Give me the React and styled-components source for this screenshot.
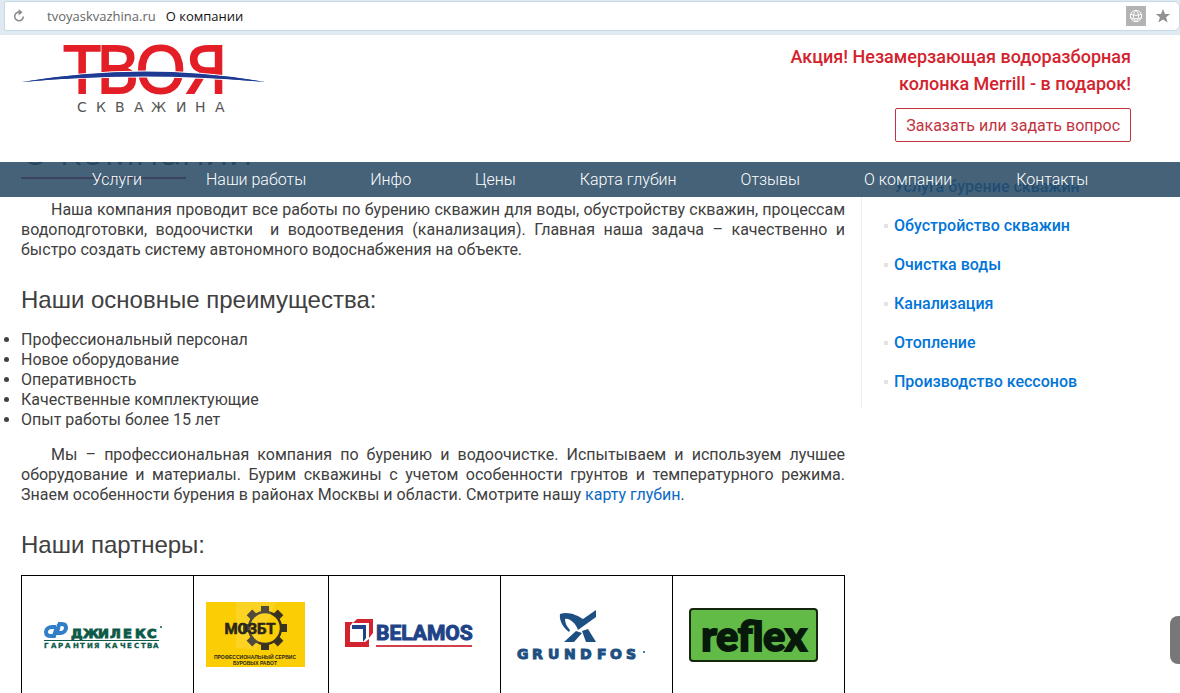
import React from 'react';
import styled, { createGlobalStyle } from 'styled-components';

const GlobalStyle = createGlobalStyle`
  * {
    box-sizing: border-box;
  }
  body {
    margin: 0;
    background: #fff;
    color: #404040;
    font-family: Roboto, "Noto Sans", sans-serif;
    font-size: 16px;
    line-height: 20px;
  }
`;

const Window = styled.div`
  position: relative;
  display: flex;
  flex-direction: column;
  height: 100vh;
  overflow: hidden;
`;

const BrowserBar = styled.div`
  flex: none;
  padding: 1px 0 4px 4px;
  background: #dfe9f1;
`;

const AddressBar = styled.div`
  display: flex;
  align-items: center;
  height: 30px;
  padding: 0 6px 0 8px;
  background: #fff;
  border: 1px solid #c6dae6;
  border-radius: 2px 6px 6px 2px;
  font-family: "Open Sans", "Noto Sans", sans-serif;
  font-size: 13px;
`;

const BarButton = styled.button`
  display: flex;
  align-items: center;
  justify-content: center;
  width: 20px;
  height: 20px;
  margin-left: ${props => props.$gap || 0};
  padding: 0;
  border: 0;
  background: ${props => props.$fill || 'none'};
`;

const Host = styled.span`
  margin-left: 18px;
  color: #666;
`;

const PageTitle = styled.span`
  flex: 1;
  margin-left: 10px;
  color: #111;
`;

const Site = styled.div`
  position: relative;
  flex: 1;
  min-height: 0;
`;

const Header = styled.header`
  position: absolute;
  top: 0;
  left: 0;
  right: 0;
  z-index: 2;
`;

const HeaderTop = styled.div`
  display: flex;
  justify-content: space-between;
  align-items: flex-start;
  padding: 8px 49px 20px 21px;
  background: #fff;
`;

const Promo = styled.div`
  display: flex;
  flex-direction: column;
  align-items: flex-end;
  gap: 11px;
  width: 360px;
`;

const PromoText = styled.p`
  margin: 0;
  color: #d2232e;
  font-size: 18px;
  font-weight: 500;
  line-height: 27px;
  text-align: right;
`;

const AskButton = styled.button`
  height: 34px;
  padding: 0 10px;
  border: 1px solid #c0343f;
  border-radius: 2px;
  background: #fff;
  color: #c0343f;
  font-family: inherit;
  font-size: 16px;
`;

const Nav = styled.nav`
  display: flex;
  justify-content: center;
  align-items: center;
  gap: 64px;
  height: 35px;
  background: rgba(37, 70, 98, 0.85);
`;

const NavLink = styled.a`
  color: #fff;
  font-weight: 300;
  text-decoration: none;
`;

const Content = styled.div`
  display: flex;
  align-items: flex-start;
  gap: 16px;
  padding: 90px 21px 0;
`;

const Main = styled.main`
  flex: 1;
`;

const Title = styled.h1`
  margin: 0 0 21px;
  font-size: 42px;
  font-weight: 300;
  line-height: 52px;

  &::after {
    content: "";
    display: block;
    width: 20%;
    height: 2px;
    background: #c0343f;
  }
`;

const Subtitle = styled.h2`
  margin: 26px 0 16px;
  font-family: "Liberation Sans", sans-serif;
  font-size: 24px;
  font-weight: 400;
  line-height: 28px;
`;

const Text = styled.p`
  margin: 15px 0 0;
  text-align: justify;
  text-indent: 30px;
`;

const TextLink = styled.a`
  color: #0d69c4;
  text-decoration: none;
`;

const List = styled.ul`
  margin: 0;
  padding: 0;
`;

const Partners = styled.table`
  width: 100%;
  border-collapse: collapse;
`;

const Partner = styled.td`
  width: ${props => props.$width};
  height: 118px;
  padding: 0 10px 0 0;
  border: 1px solid #000;
  vertical-align: middle;

  svg {
    display: block;
    margin: 0 auto;
    overflow: visible;
  }
`;

const Sidebar = styled.aside`
  flex: 0 0 298px;
  margin-top: 34px;
  padding: 8px 0 7px 22px;
  border-left: 1px solid #eee;
`;

const SideLink = styled.a`
  display: flex;
  align-items: center;
  gap: 6px;
  height: 39px;
  color: #0275d8;
  font-weight: 500;
  text-decoration: none;

  &::before {
    content: "";
    width: 4px;
    height: 4px;
    background: #e3e3e3;
  }
`;

const SideTab = styled.button`
  position: absolute;
  right: 0;
  bottom: 29px;
  z-index: 3;
  width: 10px;
  height: 48px;
  padding: 0;
  border: 0;
  border-radius: 8px 0 0 8px;
  background: #777;
`;

const menu = ['Услуги', 'Наши работы', 'Инфо', 'Цены', 'Карта глубин', 'Отзывы', 'О компании', 'Контакты'];

const services = [
  'Услуга бурение скважин',
  'Обустройство скважин',
  'Очистка воды',
  'Канализация',
  'Отопление',
  'Производство кессонов',
];

const advantages = [
  'Профессиональный персонал',
  'Новое оборудование',
  'Оперативность',
  'Качественные комплектующие',
  'Опыт работы более 15 лет',
];

const ReloadIcon = () => (
  <svg width="12" height="14" viewBox="0 0 12 14" fill="none" stroke="#8c8c8c" strokeWidth="1.6">
    <path d="M6.5 3.2A4.3 4.3 0 1 0 10.3 7.5" />
    <path d="M5.6 0v6.4L9.6 3.2z" fill="#8c8c8c" stroke="none" />
  </svg>
);

const GlobeIcon = () => (
  <svg width="14" height="14" viewBox="0 0 14 14" fill="none" stroke="#fff" strokeWidth="1">
    <circle cx="7" cy="7" r="5.6" />
    <path d="M7 1.4C3.6 4.6 3.6 9.4 7 12.6M7 1.4c3.4 3.2 3.4 8 0 11.2M1.6 5.2c3.4 1.4 7.4 1.4 10.8 0M1.6 8.8c3.4 1.4 7.4 1.4 10.8 0" />
  </svg>
);

const StarIcon = () => (
  <svg width="16" height="16" viewBox="0 0 16 16">
    <path d="M8 1l2 5h5.2l-4.1 3.3 1.5 5.2L8 11.5l-4.6 3 1.5-5.2L.8 6H6z" fill="#929292" />
  </svg>
);

const Logo = () => (
  <svg width="246" height="72" viewBox="21 43 246 72" overflow="visible" role="img" aria-label="Твоя скважина">
    <g fill="#e31e26" stroke="#e31e26" strokeWidth="2" fontFamily="Open Sans, sans-serif" fontSize="66">
      <text x="64" y="93">Т</text>
      <text x="96" y="93">В</text>
      <text x="135" y="93">О</text>
      <text x="186" y="93">Я</text>
    </g>
    <path d="M22 82Q145 61 265 82Q145 71 22 82z" fill="#1f3a93" stroke="#fff" strokeWidth="2" paintOrder="stroke" />
    <path d="M22 82Q145 62 265 82Q145 70 22 82z" fill="#1f3a93" />
    <text
      x="77 96 115 134 151 176 195 215"
      y="112"
      fill="#555"
      fontFamily="DejaVu Sans, sans-serif"
      fontSize="14"
    >
      СКВАЖИНА
    </text>
  </svg>
);

const DzhileksLogo = () => (
  <svg width="130" height="66" viewBox="38 602 130 66">
    <g fill="none" stroke="#2f7fc9" strokeWidth="4">
      <path d="M56 627h-4c-3 0-6 2-6 5s2 4 5 4h3l3-9" />
      <path d="M58 624h4c3 0 4 2 4 4s-2 5-5 5h-4l2-9" />
    </g>
    <text
      x="71 83 98 110 123 135 147"
      y="638"
      fill="#0d5a48"
      stroke="#0d5a48"
      strokeWidth="1"
      fontFamily="DejaVu Sans, sans-serif"
      fontWeight="700"
      fontSize="13"
    >
      ДЖИЛЕКС
    </text>
    <rect x="44" y="640" width="115" height="1" fill="#0d5a48" />
    <circle cx="161" cy="627" r="1" fill="#0d5a48" />
    <g fill="#0d5a48" stroke="#0d5a48" strokeWidth="0.3" fontFamily="DejaVu Sans, sans-serif" fontWeight="700" fontSize="7">
      <text x="44 51 58 65 73 80 87 94" y="648">ГАРАНТИЯ</text>
      <text x="105 112 120 127 134 141 147 153" y="648">КАЧЕСТВА</text>
    </g>
  </svg>
);

const teeth = [0, 45, 90, 135, 180, 225, 270, 315];

const MozbtLogo = () => (
  <svg width="99" height="65" viewBox="206 602 99 65">
    <rect x="206" y="602" width="99" height="65" fill="#fbcd05" />
    <g fill="#3a3320">
      {teeth.map(angle => (
        <rect key={angle} x="261" y="606" width="8" height="6" transform={`rotate(${angle} 265 628)`} />
      ))}
    </g>
    <circle cx="265" cy="628" r="16" fill="none" stroke="#3a3320" strokeWidth="2.5" />
    <path d="M236 602h40l-20 48q-12-2-20-2z" fill="#fff" opacity="0.12" />
    <text
      x="250"
      y="634"
      textAnchor="middle"
      fill="#2b2619"
      stroke="#2b2619"
      strokeWidth="0.6"
      fontFamily="Roboto, sans-serif"
      fontWeight="700"
      fontSize="15"
    >
      МОЗБТ
    </text>
    <g textAnchor="middle" fill="#2b2619" fontFamily="Liberation Sans, sans-serif" fontWeight="700" fontSize="5">
      <text x="255" y="659">ПРОФЕССИОНАЛЬНЫЙ СЕРВИС</text>
      <text x="255" y="665">БУРОВЫХ РАБОТ</text>
    </g>
  </svg>
);

const BelamosLogo = () => (
  <svg width="130" height="66" viewBox="344 602 130 66">
    <path d="M345 622h8l-3 4v16h15l4-3v8h-24z" fill="#d2232e" />
    <path d="M357 619h16v14l-4 5v-15h-16z" fill="#d2232e" />
    <path d="M352 625h14v13l-3 4v-13h-11z" fill="#1e4387" />
    <text
      x="376"
      y="640"
      fill="#1e4387"
      stroke="#1e4387"
      strokeWidth="1"
      fontFamily="Roboto, sans-serif"
      fontWeight="700"
      fontSize="21"
    >
      BELAMOS
    </text>
    <rect x="376" y="645" width="96" height="2" fill="#d2414a" />
  </svg>
);

const GrundfosLogo = () => (
  <svg width="130" height="66" viewBox="515 602 130 66">
    <path
      d="M568 632C561 627 558 619 559 614C567 611 576 615 582 619L595 610V617L577 630C574 622 568 618 564 619C564 623 566 627 569 630z"
      fill="#1d4f82"
    />
    <path d="M575 631l6 2-8 9h-10zM581 631l6-2 8 13h-10z" fill="#1d4f82" />
    <text
      x="516 531 547 563 579 596 609 625"
      y="659"
      fill="#1d4f82"
      stroke="#1d4f82"
      strokeWidth="1"
      fontFamily="DejaVu Sans, sans-serif"
      fontWeight="700"
      fontSize="14"
    >
      GRUNDFOS
    </text>
    <circle cx="643" cy="652" r="1" fill="#1d4f82" />
  </svg>
);

const ReflexLogo = () => (
  <svg width="130" height="66" viewBox="688 601 130 66">
    <rect x="690" y="608" width="127" height="52" rx="3" fill="#62bb46" stroke="#16260f" strokeWidth="2" />
    <text
      x="754"
      y="650"
      textAnchor="middle"
      fill="#06190a"
      stroke="#06190a"
      strokeWidth="2"
      fontFamily="Lato, sans-serif"
      fontWeight="900"
      fontSize="41"
    >
      reflex
    </text>
  </svg>
);

const partners = [
  { name: 'Джилекс', logo: DzhileksLogo, width: '20.9%' },
  { name: 'МОЗБТ', logo: MozbtLogo, width: '16.4%' },
  { name: 'Belamos', logo: BelamosLogo, width: '20.9%' },
  { name: 'Grundfos', logo: GrundfosLogo, width: '20.9%' },
  { name: 'Reflex', logo: ReflexLogo, width: '20.9%' },
];

const App = () => {
  return (
    <Window>
      <GlobalStyle />
      <BrowserBar>
        <AddressBar>
          <BarButton $gap="-4px" aria-label="Обновить"><ReloadIcon /></BarButton>
          <Host>tvoyaskvazhina.ru</Host>
          <PageTitle>О компании</PageTitle>
          <BarButton $fill="#b3b3b3" aria-label="Перевести"><GlobeIcon /></BarButton>
          <BarButton $gap="7px" aria-label="В закладки"><StarIcon /></BarButton>
        </AddressBar>
      </BrowserBar>
      <Site>
        <Header>
          <HeaderTop>
            <a href="#home"><Logo /></a>
            <Promo>
              <PromoText>Акция! Незамерзающая водоразборная колонка Merrill - в подарок!</PromoText>
              <AskButton>Заказать или задать вопрос</AskButton>
            </Promo>
          </HeaderTop>
          <Nav>
            {menu.map(item => (
              <NavLink key={item} href="#menu">{item}</NavLink>
            ))}
          </Nav>
        </Header>
        <Content>
          <Main>
            <Title>О компании</Title>
            <Text>
              Наша компания проводит все работы по бурению скважин для воды, обустройству скважин,
              процессам водоподготовки, водоочистки &nbsp;и водоотведения (канализация). Главная наша
              задача – качественно и быстро создать систему автономного водоснабжения на объекте.
            </Text>
            <Subtitle>Наши основные преимущества:</Subtitle>
            <List>
              {advantages.map(item => (
                <li key={item}>{item}</li>
              ))}
            </List>
            <Text>
              Мы – профессиональная компания по бурению и водоочистке. Испытываем и используем лучшее
              оборудование и материалы. Бурим скважины с учетом особенности грунтов и температурного
              режима. Знаем особенности бурения в районах Москвы и области. Смотрите
              нашу <TextLink href="#map">карту глубин</TextLink>.
            </Text>
            <Subtitle>Наши партнеры:</Subtitle>
            <Partners>
              <tbody>
                <tr>
                  {partners.map(({ name, logo: PartnerLogo, width }) => (
                    <Partner key={name} $width={width}><PartnerLogo /></Partner>
                  ))}
                </tr>
              </tbody>
            </Partners>
          </Main>
          <Sidebar>
            {services.map(item => (
              <SideLink key={item} href="#service">{item}</SideLink>
            ))}
          </Sidebar>
        </Content>
      </Site>
      <SideTab aria-label="Открыть панель" />
    </Window>
  );
};

export default App;
